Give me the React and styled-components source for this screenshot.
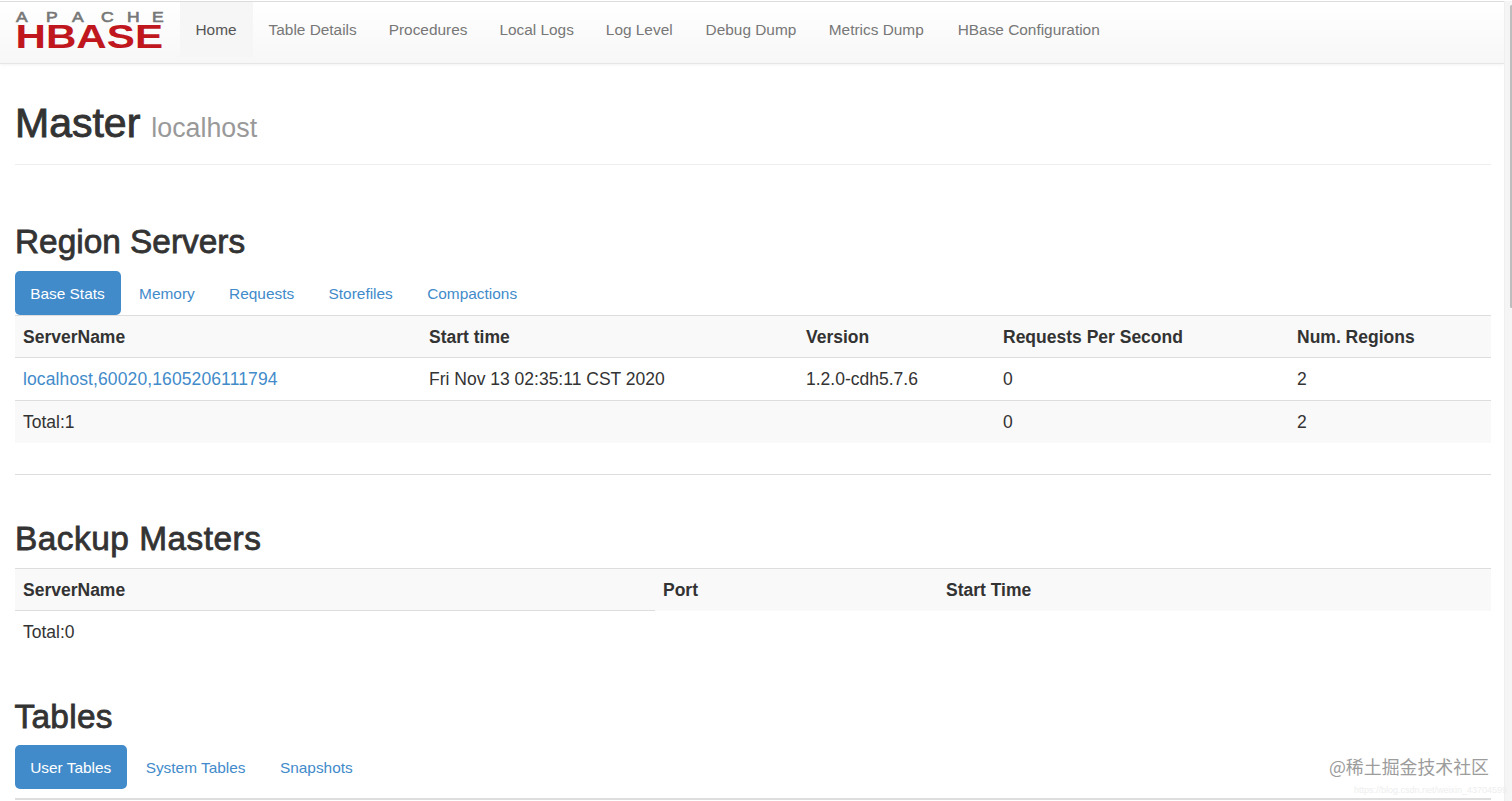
import React from 'react';
import styled, { createGlobalStyle } from 'styled-components';

const Global = createGlobalStyle`
  html, body { margin: 0; padding: 0; height: 801px; overflow: hidden; background: #fff; }
  body { font-family: "Liberation Sans", Arial, sans-serif; color: #333; }
  * { box-sizing: border-box; }
`;

const Page = styled.div`
  position: relative;
  display: flex;
  width: 1512px;
  height: 801px;
  overflow: hidden;
  padding-top: 1px;
`;
const Main = styled.div`
  width: 1504px;
  flex: none;
  height: 800px;
  overflow: hidden;
`;
const Track = styled.div`
  width: 8px;
  flex: none;
  background: #f5f5f5;
  border-left: 1px solid #efefef;
  padding: 4px 0 0 5px;
`;
const Thumb = styled.div`
  width: 3px;
  height: 303px;
  background: #bdbdbd;
  border-radius: 2px;
`;
const Navbar = styled.nav`
  display: flex;
  height: 63px;
  background: linear-gradient(to bottom, #fff, #f7f7f7);
  border-top: 1px solid #dcdcdc;
  border-bottom: 1px solid #e6e6e6;
  box-shadow: 0 1px 3px rgba(0,0,0,.05);
`;
const Brand = styled.div`
  width: 179.5px;
  flex: none;
  display: flex;
  align-items: center;
  padding-left: 15px;
`;
const LogoSvg = styled.svg`
  display: block;
  overflow: visible;
`;
const NavItem = styled.a`
  display: flex;
  align-items: center;
  height: 55px;
  padding: 0 ${p => 16 + (p.$extra || 0)}px 0 16px;
  font-size: 15.4px;
  color: ${p => (p.$active ? '#555' : '#777')};
  background: ${p => (p.$active ? '#f6f6f6' : 'transparent')};
`;
const Content = styled.div`
  padding: 0 13px 0 14.5px;
`;
const PageHeader = styled.header`
  height: 101px;
  padding: 34px 0 0 .5px;
  border-bottom: 1px solid #eee;
  display: flex;
  align-items: baseline;
  gap: 11px;
`;
const Title = styled.h1`
  margin: 0;
  font-size: 41px;
  line-height: 50px;
  font-weight: 400;
  -webkit-text-stroke: .9px #333;
  color: #333;
`;
const Sub = styled.small`
  font-size: 26.8px;
  color: #999;
`;
const Section = styled.h2`
  margin: ${p => p.$top}px 0 ${p => p.$bottom}px ${p => p.$left || 0}px;
  font-size: 33.4px;
  line-height: 40px;
  font-weight: 400;
  letter-spacing: ${p => p.$track || 0}px;
  -webkit-text-stroke: .8px #333;
  color: #333;
`;
const Tabs = styled.div`
  display: flex;
  gap: 2.7px;
  height: 44px;
`;
const Tab = styled.a`
  display: flex;
  align-items: center;
  height: 44px;
  padding: 1px 16px 0 15.7px;
  border-radius: 5px;
  font-size: 15.42px;
  color: ${p => (p.$active ? '#fff' : '#428bca')};
  background: ${p => (p.$active ? '#428bca' : 'transparent')};
`;
const Table = styled.table`
  width: 100%;
  table-layout: fixed;
  border-collapse: separate;
  border-spacing: 0;
  font-size: 17.5px;
  border-top: 1px solid #ddd;

  th:first-child, td:first-child {
    padding-left: 8.5px;
  }
`;
const Col = styled.col`
  width: ${p => p.$w}px;
`;
const Th = styled.th`
  height: 42px;
  padding: 1px 8px 0;
  text-align: left;
  font-weight: 700;
  color: #333;
  background: #f9f9f9;
  border-bottom: ${p => (p.$noLine ? '0' : '1px solid #ddd')};
`;
const Td = styled.td`
  height: ${p => p.$h || 43}px;
  padding: 0 8px;
  color: #333;
  background: ${p => (p.$striped ? '#f9f9f9' : 'transparent')};
  border-bottom: ${p => (p.$line ? '1px solid #ddd' : '0')};
`;
const Link = styled.a`
  color: #428bca;
  letter-spacing: .11px;
`;
const Rule = styled.hr`
  margin: 31px 0 0;
  border: 0;
  border-top: 1px solid #ddd;
`;
const BottomLine = styled.div`
  margin-top: 9px;
  border-top: 2px solid #ddd;
`;
const Watermark = styled.div`
  position: absolute;
  right: 23px;
  top: 754px;
  font-size: 17.9px;
  line-height: 24px;
  color: #9c9c9c;
  font-family: "Noto Sans CJK SC", sans-serif;
  white-space: nowrap;
`;
const Source = styled.div`
  position: absolute;
  right: 5px;
  top: 784px;
  font-size: 9px;
  line-height: 12px;
  color: #eee;
  white-space: nowrap;
`;

const Logo = () => (
  <LogoSvg width="150" height="44" viewBox="0 0 150 44" aria-label="Apache HBase">
    <text
      transform="scale(1.25 1)"
      x=".8 24.8 45.6 68.8 89.6 109.6"
      y="11"
      fontFamily="'Liberation Sans', sans-serif"
      fontSize="14"
      fill="#777"
      stroke="#777"
      strokeWidth=".6"
    >
      APACHE
    </text>
    <text x="0.5" y="37" fontFamily="'Liberation Sans', sans-serif" fontWeight="700" fontSize="33" fill="#c0171e" textLength="147.5" lengthAdjust="spacingAndGlyphs">HBASE</text>
  </LogoSvg>
);

const navItems = [
  { label: 'Table Details' },
  { label: 'Procedures' },
  { label: 'Local Logs' },
  { label: 'Log Level', extra: 1 },
  { label: 'Debug Dump', extra: 0.5 },
  { label: 'Metrics Dump', extra: 2 },
  { label: 'HBase Configuration' },
];

export default function App() {
  return (
    <Page>
      <Global />
      <Main>
        <Navbar>
          <Brand><Logo /></Brand>
          <NavItem $active>Home</NavItem>
          {navItems.map(n => <NavItem key={n.label} $extra={n.extra}>{n.label}</NavItem>)}
        </Navbar>
        <Content>
          <PageHeader>
            <Title>Master</Title>
            <Sub>localhost</Sub>
          </PageHeader>
          <Section $top={57} $bottom={9} $left={0.5}>Region Servers</Section>
          <Tabs>
            <Tab $active>Base Stats</Tab>
            <Tab>Memory</Tab>
            <Tab>Requests</Tab>
            <Tab>Storefiles</Tab>
            <Tab>Compactions</Tab>
          </Tabs>
          <Table>
            <colgroup>
              <Col $w={406.5} /><Col $w={377} /><Col $w={197} /><Col $w={294} /><Col $w={202} />
            </colgroup>
            <thead>
              <tr><Th>ServerName</Th><Th>Start time</Th><Th>Version</Th><Th>Requests Per Second</Th><Th>Num. Regions</Th></tr>
            </thead>
            <tbody>
              <tr>
                <Td $line><Link>localhost,60020,1605206111794</Link></Td>
                <Td $line>Fri Nov 13 02:35:11 CST 2020</Td>
                <Td $line>1.2.0-cdh5.7.6</Td>
                <Td $line>0</Td>
                <Td $line>2</Td>
              </tr>
              <tr>
                <Td $striped $h={42}>Total:1</Td><Td $striped $h={42} /><Td $striped $h={42} /><Td $striped $h={42}>0</Td><Td $striped $h={42}>2</Td>
              </tr>
            </tbody>
          </Table>
          <Rule />
          <Section $top={44} $bottom={9} $left={0.5} $track={0.5}>Backup Masters</Section>
          <Table>
            <colgroup>
              <Col $w={640.5} /><Col $w={283} /><Col $w={553} />
            </colgroup>
            <thead>
              <tr><Th>ServerName</Th><Th $noLine>Port</Th><Th $noLine>Start Time</Th></tr>
            </thead>
            <tbody>
              <tr><Td>Total:0</Td><Td /><Td /></tr>
            </tbody>
          </Table>
          <Section $top={43} $bottom={8} $track={0.3}>Tables</Section>
          <Tabs>
            <Tab $active>User Tables</Tab>
            <Tab>System Tables</Tab>
            <Tab>Snapshots</Tab>
          </Tabs>
          <BottomLine />
        </Content>
      </Main>
      <Track><Thumb /></Track>
      <Watermark>@稀土掘金技术社区</Watermark>
      <Source>https://blog.csdn.net/weixin_43704599</Source>
    </Page>
  );
}
